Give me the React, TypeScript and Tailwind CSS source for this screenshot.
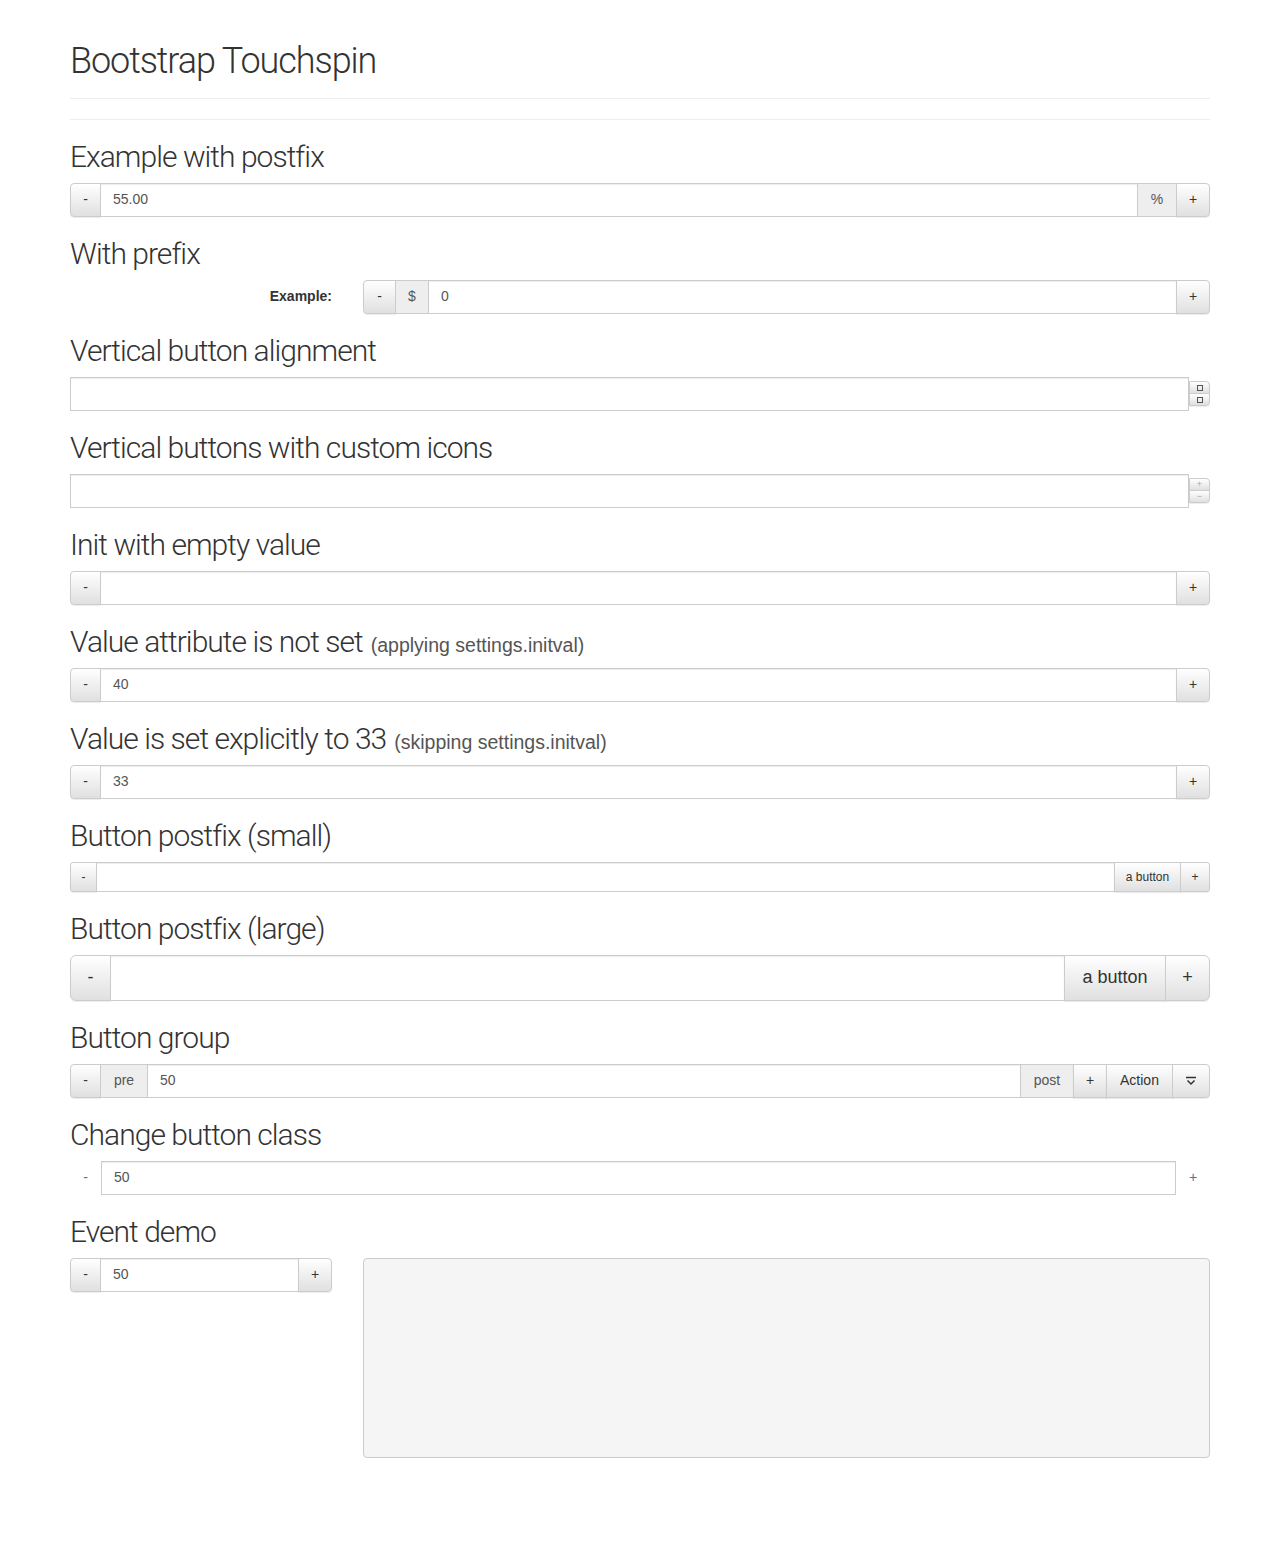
import type { ReactNode } from "react";

const heading =
  "mt-5 mb-[10px] text-[30px] leading-[1.1] font-light tracking-[-0.032em] text-[#333] font-['Roboto',sans-serif]";
const btn =
  "flex items-center justify-center border border-[#ccc] bg-linear-to-b from-white to-[#e0e0e0] text-[#333] shadow-[0_1px_1px_rgba(0,0,0,0.075)]";
const addon = "flex items-center justify-center border border-[#ccc] bg-[#eee] text-[#555]";
const field =
  "flex items-center border border-[#ccc] bg-white text-[#555] shadow-[inset_0_1px_1px_rgba(0,0,0,0.075)]";

function Title({ children, note }: { children: ReactNode; note?: string }) {
  return (
    <h2 className={heading}>
      {children}
      {note && (
        <span className="ml-2 text-[19.5px] font-normal tracking-normal text-[#555] font-['Liberation_Sans',sans-serif]">
          {note}
        </span>
      )}
    </h2>
  );
}

// default sized touchspin: - [value] +
function Spin({ value = "", className = "" }: { value?: string; className?: string }) {
  return (
    <div className={`flex h-[34px] text-[14px] ${className}`}>
      <button className={`${btn} w-[31px] rounded-l-[4px]`}>-</button>
      <div className={`${field} -ml-px flex-1 px-3`}>{value}</div>
      <button className={`${btn} -ml-px w-[34px] rounded-r-[4px]`}>+</button>
    </div>
  );
}

function VerticalSpin({ up, down }: { up: ReactNode; down: ReactNode }) {
  return (
    <div className="flex h-[34px] items-center">
      <div className={`${field} h-[34px] flex-1`}></div>
      <div className="flex w-[21px] flex-col">
        <button className={`${btn} h-[13px] rounded-tr-[4px]`}>{up}</button>
        <button className={`${btn} -mt-px h-[13px] rounded-br-[4px]`}>{down}</button>
      </div>
    </div>
  );
}

const box = <span className="block h-[6px] w-[6px] border border-[#555]"></span>;

export default function App() {
  return (
    <div className="min-h-[1568px] bg-white font-['Liberation_Sans',sans-serif] text-[14px] text-[#333]">
      <div className="mx-auto w-[1140px]">
        {/* Page header */}
        <div className="border-b border-[#eee] pt-[42px] pb-[8px]">
          <h1 className="mb-[8px] text-[36px] leading-[1.1] font-light tracking-[-0.03em] font-['Roboto',sans-serif]">
            Bootstrap Touchspin
          </h1>
        </div>
        <hr className="mt-5 border-t border-[#eee]" />

        <Title>Example with postfix</Title>
        <div className="flex h-[34px]">
          <button className={`${btn} w-[31px] rounded-l-[4px]`}>-</button>
          <div className={`${field} -ml-px flex-1 px-3`}>55.00</div>
          <span className={`${addon} -ml-px w-[40px]`}>%</span>
          <button className={`${btn} -ml-px w-[34px] rounded-r-[4px]`}>+</button>
        </div>

        <Title>With prefix</Title>
        <div className="flex items-center">
          <label className="w-[262px] text-right text-[14px] font-bold">Example:</label>
          <div className="ml-[31px] flex h-[34px] flex-1">
            <button className={`${btn} w-[33px] rounded-l-[4px]`}>-</button>
            <span className={`${addon} -ml-px w-[34px]`}>$</span>
            <div className={`${field} -ml-px flex-1 px-3`}>0</div>
            <button className={`${btn} -ml-px w-[34px] rounded-r-[4px]`}>+</button>
          </div>
        </div>

        <Title>Vertical button alignment</Title>
        <VerticalSpin up={box} down={box} />

        <Title>Vertical buttons with custom icons</Title>
        <VerticalSpin
          up={<span className="text-[9px] leading-none text-[#aaa]">+</span>}
          down={<span className="text-[9px] leading-none text-[#aaa]">−</span>}
        />

        <Title>Init with empty value</Title>
        <Spin />

        <Title note="(applying settings.initval)">Value attribute is not set</Title>
        <Spin value="40" />

        <Title note="(skipping settings.initval)">Value is set explicitly to 33</Title>
        <Spin value="33" />

        <Title>Button postfix (small)</Title>
        <div className="flex h-[30px] text-[12px]">
          <button className={`${btn} w-[27px] rounded-l-[3px]`}>-</button>
          <div className={`${field} -ml-px flex-1 px-[10px]`}></div>
          <button className={`${btn} -ml-px w-[67px]`}>a button</button>
          <button className={`${btn} -ml-px w-[30px] rounded-r-[3px]`}>+</button>
        </div>

        <Title>Button postfix (large)</Title>
        <div className="flex h-[46px] text-[18px]">
          <button className={`${btn} w-[41px] rounded-l-[6px]`}>-</button>
          <div className={`${field} -ml-px flex-1 px-4`}></div>
          <button className={`${btn} -ml-px w-[102px]`}>a button</button>
          <button className={`${btn} -ml-px w-[45px] rounded-r-[6px]`}>+</button>
        </div>

        <Title>Button group</Title>
        <div className="flex h-[34px]">
          <button className={`${btn} w-[31px] rounded-l-[4px]`}>-</button>
          <span className={`${addon} -ml-px w-[48px]`}>pre</span>
          <div className={`${field} -ml-px flex-1 px-3`}>50</div>
          <span className={`${addon} -ml-px w-[54px]`}>post</span>
          <button className={`${btn} -ml-px w-[34px]`}>+</button>
          <button className={`${btn} -ml-px w-[67px]`}>Action</button>
          <button className={`${btn} -ml-px w-[38px] rounded-r-[4px]`}>
            <svg width="12" height="10" viewBox="0 0 12 10" fill="none" stroke="#333" strokeWidth="1.5">
              <path d="M1 1.5h10" />
              <path d="M2.5 4.5l3.5 3.5 3.5-3.5" />
            </svg>
          </button>
        </div>

        <Title>Change button class</Title>
        <div className="flex h-[34px]">
          <button className="flex w-[31px] items-center justify-center text-[#337ab7]">-</button>
          <div className={`${field} flex-1 px-3`}>50</div>
          <button className="flex w-[34px] items-center justify-center text-[#337ab7]">+</button>
        </div>

        <Title>Event demo</Title>
        <div className="flex items-start">
          <Spin value="50" className="w-[262px]" />
          <pre className="ml-[31px] h-[200px] flex-1 rounded-[4px] border border-[#ccc] bg-[#f5f5f5]"></pre>
        </div>
      </div>
    </div>
  );
}
